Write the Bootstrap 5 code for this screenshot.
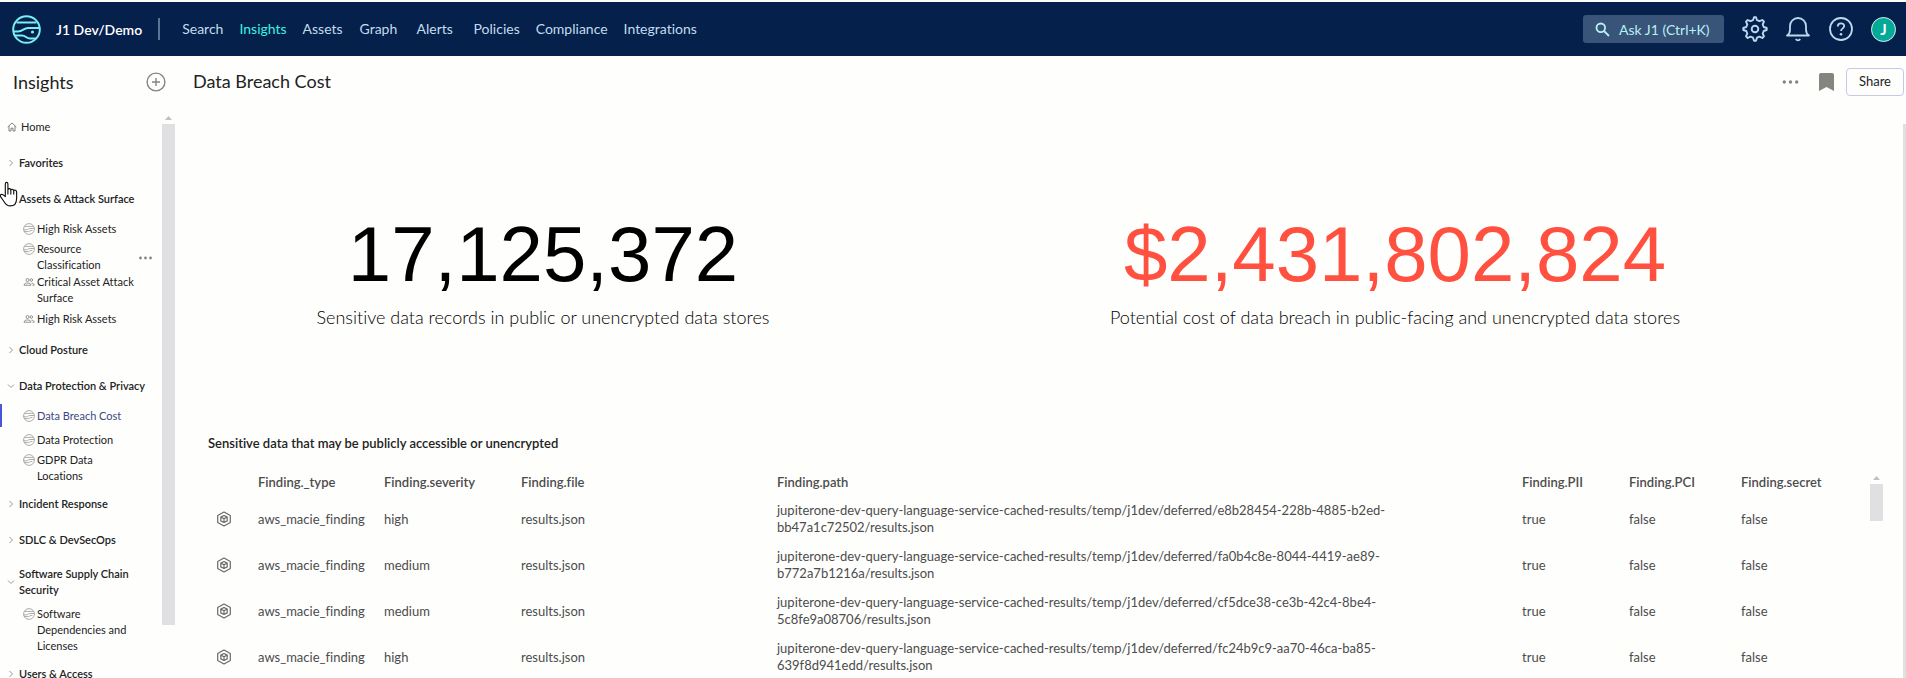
<!DOCTYPE html>
<html lang="en">
<head>
<meta charset="utf-8">
<meta name="viewport" content="width=device-width, initial-scale=1">
<title>Data Breach Cost - Insights</title>
<link href="https://cdn.jsdelivr.net/npm/bootstrap@5.3.0/dist/css/bootstrap.min.css" rel="stylesheet">
<style>
  body { font-family: Lato, "Liberation Sans", sans-serif; font-size: 14px; font-variant-ligatures: none; background: #fefefd; color: #222; }
  svg { display: block; flex: none; }
  .topbar { height: 54px; margin-top: 2px; background: #04204b; padding: 0 10px 0 12px; }
  .org { color: #fff; font-size: 14px; font-weight: 600; margin-left: 15px; text-decoration: none; }
  .rule { width: 2px; height: 22px; background: #5a7593; margin: 0 22px 0 16px; }
  .topbar .nav-link { color: #c3dcec; padding: 0; line-height: 20px; min-width: 41px; }
  .topbar .nav-link.active { color: #3cf3e2; }
  .menu { gap: 16px; }
  .ask { width: 141px; height: 28px; background: #3a5378; color: #b4f1f5; border: 0; border-radius: 3px; font-size: 14px; padding: 0 12px; gap: 9px; }
  .tools { gap: 17px; padding-left: 18px; }
  .plain { background: none; border: 0; padding: 0; }
  .avatar { width: 25px; height: 25px; border: 1px solid #d6f3f1; background: #04a998; color: #fff; font-size: 15px; font-weight: 700; line-height: 20px; }
  .side { width: 175px; }
  .side-head { height: 52px; padding: 0 9px 0 13px; font-size: 18px; }
  .side-list { width: 162px; padding-top: 1px; font-size: 11px; line-height: 16px; }
  .side-list a, .side-list button { color: #222; text-decoration: none; text-align: left; }
  .group { display: flex; align-items: center; gap: 4px; width: 100%; min-height: 36px; padding: 0 6px 0 7px; background: none; border: 0; font-weight: 600; }
  .group.tall { min-height: 48px; padding-right: 20px; }
  .home { font-weight: 400; }
  .entries { padding: 0 0 1px; margin: 0; list-style: none; }
  .entry { display: flex; min-height: 23px; margin-bottom: 1px; padding: 0 10px 0 23px; gap: 2px; align-items: center; position: relative; }
  .entry svg { align-self: flex-start; margin-top: 2px; }
  .entry.single svg { align-self: center; margin-top: 0; }
  .entry a { flex: 1; }
  .entry.narrow { padding-right: 40px; }
  .entry.current { box-shadow: inset 2px 0 #4a55d8; }
  .entry.current a { color: #3d4784; }
  .entry .more { position: absolute; right: 10px; top: 13px; line-height: 4px; }
  .track { width: 13px; }
  .track .up { height: 4px; width: 7px; margin: 0 auto 4px; background: #c0c0c2; clip-path: polygon(50% 0, 100% 100%, 0 100%); }
  .thumb { background: #e0e0e2; }
  .side .thumb { height: 501px; }
  .findings .thumb { height: 37px; }
  .main-head { height: 52px; padding: 0 2px 0 18px; }
  .main-head h1 { font-size: 18px; margin: 0; font-weight: 400; }
  .share { width: 58px; height: 28px; border: 1px solid #c5c9e6; border-radius: 4px; background: #fefefd; font-size: 13px; padding: 0; color: #222; }
  .board { padding: 0 11px 0 13px; }
  .edge { width: 3px; margin-top: 16px; background: #e0e0e2; }
  .kpi { height: 321px; padding-top: 100px; text-align: center; }
  .kpi-num { font: 78px/92px "Liberation Sans", Arial, sans-serif; color: #000; }
  .kpi-num.alert-tone { color: #ff5040; }
  .kpi-text { font-size: 18px; font-weight: 300; line-height: 24px; margin-top: 5px; color: #000; }
  .findings { padding: 0 9px 0 20px; }
  .findings h2 { font-size: 13px; line-height: 20px; font-weight: 600; margin: 0 0 15px; }
  .grid { table-layout: fixed; width: 100%; color: #4c4c4c; font-size: 13px; line-height: 17px; }
  .grid th { font-weight: 600; height: 28px; }
  .grid td { height: 46px; }
  .grid th, .grid td { padding: 0 8px; vertical-align: middle; }
  .grid .path { padding-right: 90px; }
  .hand { position: absolute; left: 0; top: 181px; }
</style>
</head>
<body class="vh-100 overflow-hidden d-flex flex-column">
<svg width="0" height="0" class="position-absolute" aria-hidden="true">
  <defs>
    <symbol id="globe" viewBox="0 0 12 12"><g fill="none" stroke="#8b8b8b" stroke-width=".7"><circle cx="6" cy="6" r="5.400"/><path d="M1.600 3.400h8.800M.7 6.800h2.800c1.400 0 1.600-1.300 3.200-1.300h4.600M1.300 8.600h4.200c1 0 1.300-1.200 2.600-1.200h1.300"/></g></symbol>
    <symbol id="people" viewBox="0 0 12 12"><g fill="none" stroke="#858585" stroke-width=".9"><circle cx="4.500" cy="4" r="1.500"/><circle cx="8.300" cy="4" r="1.300"/><path d="M1 9.200c0-3 7-3 7 0zM8.500 7.200c1.700 0 2.700.8 2.700 2H9.500"/></g></symbol>
    <symbol id="right" viewBox="0 0 8 8"><path d="M2.500 1l3 3-3 3" fill="none" stroke="#999"/></symbol>
    <symbol id="down" viewBox="0 0 8 8"><path d="M1 2.500l3 3 3-3" fill="none" stroke="#999"/></symbol>
    <symbol id="dots" viewBox="0 0 16 4"><g fill="#858580"><circle cx="1.800" cy="2" r="1.700"/><circle cx="8" cy="2" r="1.700"/><circle cx="14.200" cy="2" r="1.700"/></g></symbol>
    <symbol id="cube" viewBox="0 0 16 16"><g fill="none" stroke="#6a6a6a" stroke-width="1.200" stroke-linejoin="round"><path d="M8 1l6.300 3.500v7L8 15l-6.300-3.500v-7z"/><path d="M8 4.500l3.200 1.600v3.800L8 11.500 4.800 9.900V6.100zM4.800 6.100L8 7.700l3.200-1.600M8 7.700v3.800"/></g></symbol>
  </defs>
</svg>

<nav class="topbar d-flex align-items-center flex-shrink-0">
  <svg width="29" height="29" viewBox="0 0 29 29" fill="none" stroke="#78eff2" stroke-width="2"><circle cx="14.500" cy="14.500" r="13.300"/><path d="M4.500 7.500h20M1.500 16.500h4.500c5 0 5.500-3.500 10-3.500h11.500M3 20.500h7c4 0 4 3 8 3h6"/><circle cx="20.500" cy="17" r="1.600" fill="#78eff2" stroke="none"/></svg>
  <a class="org" href="#">J1 Dev/Demo</a>
  <span class="rule"></span>
  <div class="menu nav flex-nowrap me-auto">
    <a class="nav-link" href="#">Search</a>
    <a class="nav-link active" href="#">Insights</a>
    <a class="nav-link" href="#">Assets</a>
    <a class="nav-link" href="#">Graph</a>
    <a class="nav-link" href="#">Alerts</a>
    <a class="nav-link" href="#">Policies</a>
    <a class="nav-link" href="#">Compliance</a>
    <a class="nav-link" href="#">Integrations</a>
  </div>
  <button class="ask d-flex align-items-center text-nowrap" type="button">
    <svg width="15" height="15" viewBox="0 0 15 15" fill="none" stroke="#b4f1f5" stroke-width="1.800"><circle cx="5.800" cy="5.800" r="4.300"/><path d="M9 9l5 5"/></svg>
    Ask J1 (Ctrl+K)
  </button>
  <div class="tools d-flex align-items-center">
    <button class="plain" type="button" aria-label="Settings"><svg width="26" height="26" viewBox="0 0 26 26" fill="none" stroke="#b9d9ee" stroke-width="1.900" stroke-linejoin="round"><path d="M11 4.200 12 1.300h2l1 2.900 2.500 1L20.300 4 22 5.700l-1.300 2.800 1 2.500 3 1v2l-3 1-1 2.500 1.300 2.800-1.700 1.700-2.800-1.300-2.500 1-1 3h-2l-1-3-2.500-1L5.700 22 4 20.300l1.300-2.800-1-2.500-3-1v-2l3-1 1-2.500L4 5.700 5.700 4l2.800 1.200z"/><circle cx="13" cy="13" r="3.300"/></svg></button>
    <button class="plain" type="button" aria-label="Notifications"><svg width="26" height="26" viewBox="0 0 26 26" fill="none" stroke="#b9d9ee" stroke-width="1.800" stroke-linejoin="round"><path d="M2 19.500c2.500-1.500 3-3 3-6V10a8 8 0 0 1 16 0v3.500c0 3 .5 4.500 3 6z"/><path d="M10.800 23c1 1.800 3.400 1.800 4.400 0"/></svg></button>
    <button class="plain" type="button" aria-label="Help"><svg width="26" height="26" viewBox="0 0 26 26" fill="none" stroke="#b9d9ee" stroke-width="1.800"><circle cx="13" cy="13" r="11"/><path d="M9.800 10.500c0-4.200 6.400-4.200 6.400-.4 0 2.200-3.200 2.400-3.200 5"/><circle cx="13" cy="18.300" r="1.300" fill="#b9d9ee" stroke="none"/></svg></button>
    <button class="avatar rounded-circle p-0" type="button">J</button>
  </div>
</nav>

<div class="d-flex flex-fill overflow-hidden">
  <aside class="side flex-shrink-0">
    <div class="side-head d-flex align-items-center justify-content-between">
      <span>Insights</span>
      <button class="plain" type="button" aria-label="Add"><svg width="20" height="20" viewBox="0 0 20 20" fill="none" stroke="#858580" stroke-width="1.400"><circle cx="10" cy="10" r="8.900"/><path d="M10 6v8M6 10h8"/></svg></button>
    </div>
    <div class="d-flex">
      <div class="side-list">
        <a class="group home" href="#"><svg width="10" height="10" viewBox="0 0 10 10" fill="none" stroke="#777" stroke-width=".9"><path d="M.7 5L5 1l4.300 4M2 4v5h2V6.200h2V9h2V4"/></svg>Home</a>
        <button class="group" type="button"><svg width="8" height="8"><use href="#right"/></svg>Favorites</button>
        <button class="group" type="button"><svg width="8" height="8"><use href="#down"/></svg>Assets &amp; Attack Surface</button>
        <ul class="entries">
          <li class="entry single"><svg width="12" height="12"><use href="#globe"/></svg><a href="#">High Risk Assets</a></li>
          <li class="entry narrow"><svg width="12" height="12"><use href="#globe"/></svg><a href="#">Resource Classification</a><button class="plain more" type="button" aria-label="More"><svg width="13" height="4"><use href="#dots"/></svg></button></li>
          <li class="entry"><svg width="12" height="12"><use href="#people"/></svg><a href="#">Critical Asset Attack Surface</a></li>
          <li class="entry single"><svg width="12" height="12"><use href="#people"/></svg><a href="#">High Risk Assets</a></li>
        </ul>
        <button class="group" type="button"><svg width="8" height="8"><use href="#right"/></svg>Cloud Posture</button>
        <button class="group" type="button"><svg width="8" height="8"><use href="#down"/></svg>Data Protection &amp; Privacy</button>
        <ul class="entries">
          <li class="entry single current"><svg width="12" height="12"><use href="#globe"/></svg><a href="#">Data Breach Cost</a></li>
          <li class="entry single"><svg width="12" height="12"><use href="#globe"/></svg><a href="#">Data Protection</a></li>
          <li class="entry narrow"><svg width="12" height="12"><use href="#globe"/></svg><a href="#">GDPR Data Locations</a></li>
        </ul>
        <button class="group" type="button"><svg width="8" height="8"><use href="#right"/></svg>Incident Response</button>
        <button class="group" type="button"><svg width="8" height="8"><use href="#right"/></svg>SDLC &amp; DevSecOps</button>
        <button class="group tall" type="button"><svg width="8" height="8"><use href="#down"/></svg>Software Supply Chain Security</button>
        <ul class="entries">
          <li class="entry"><svg width="12" height="12"><use href="#globe"/></svg><a href="#">Software Dependencies and Licenses</a></li>
        </ul>
        <button class="group" type="button"><svg width="8" height="8"><use href="#right"/></svg>Users &amp; Access</button>
      </div>
      <div class="track pt-1"><div class="up mt-1"></div><div class="thumb"></div></div>
    </div>
  </aside>

  <main class="flex-fill d-flex flex-column overflow-hidden">
    <div class="main-head d-flex align-items-center flex-shrink-0">
      <h1 class="me-auto">Data Breach Cost</h1>
      <button class="plain me-3" type="button" aria-label="More"><svg width="17" height="4"><use href="#dots"/></svg></button>
      <button class="plain ms-1 me-2" type="button" aria-label="Bookmark"><svg width="15" height="18" viewBox="0 0 15 18"><path d="M2 0h11a2 2 0 0 1 2 2v16l-7.500-4L0 18V2a2 2 0 0 1 2-2z" fill="#858580"/></svg></button>
      <button class="share ms-1" type="button">Share</button>
    </div>
    <div class="d-flex flex-fill overflow-hidden">
      <div class="board flex-fill overflow-hidden">
        <div class="row g-0">
          <section class="col-5 kpi">
            <div class="kpi-num">17,125,372</div>
            <div class="kpi-text">Sensitive data records in public or unencrypted data stores</div>
          </section>
          <section class="col-7 kpi">
            <div class="kpi-num alert-tone">$2,431,802,824</div>
            <div class="kpi-text">Potential cost of data breach in public-facing and unencrypted data stores</div>
          </section>
        </div>
        <section class="findings">
          <h2 class="pt-1">Sensitive data that may be publicly accessible or unencrypted</h2>
          <div class="d-flex">
            <table class="grid">
              <colgroup><col width="42"><col width="126"><col width="137"><col width="256"><col><col width="107"><col width="112"><col width="137"></colgroup>
              <thead>
                <tr><th></th><th>Finding._type</th><th>Finding.severity</th><th>Finding.file</th><th>Finding.path</th><th>Finding.PII</th><th>Finding.PCI</th><th>Finding.secret</th></tr>
              </thead>
              <tbody>
                <tr><td><svg width="16" height="16"><use href="#cube"/></svg></td><td>aws_macie_finding</td><td>high</td><td>results.json</td><td class="path">jupiterone-dev-query-language-service-cached-results/temp/j1dev/deferred/e8b28454-228b-4885-b2ed-bb47a1c72502/results.json</td><td>true</td><td>false</td><td>false</td></tr>
                <tr><td><svg width="16" height="16"><use href="#cube"/></svg></td><td>aws_macie_finding</td><td>medium</td><td>results.json</td><td class="path">jupiterone-dev-query-language-service-cached-results/temp/j1dev/deferred/fa0b4c8e-8044-4419-ae89-b772a7b1216a/results.json</td><td>true</td><td>false</td><td>false</td></tr>
                <tr><td><svg width="16" height="16"><use href="#cube"/></svg></td><td>aws_macie_finding</td><td>medium</td><td>results.json</td><td class="path">jupiterone-dev-query-language-service-cached-results/temp/j1dev/deferred/cf5dce38-ce3b-42c4-8be4-5c8fe9a08706/results.json</td><td>true</td><td>false</td><td>false</td></tr>
                <tr><td><svg width="16" height="16"><use href="#cube"/></svg></td><td>aws_macie_finding</td><td>high</td><td>results.json</td><td class="path">jupiterone-dev-query-language-service-cached-results/temp/j1dev/deferred/fc24b9c9-aa70-46ca-ba85-639f8d941edd/results.json</td><td>true</td><td>false</td><td>false</td></tr>
              </tbody>
            </table>
            <div class="track flex-shrink-0 pt-2"><div class="up"></div><div class="thumb"></div></div>
          </div>
        </section>
      </div>
      <div class="edge flex-shrink-0"></div>
    </div>
  </main>
</div>

<svg class="hand" width="21" height="27" viewBox="0 0 20 26" fill="#fff" stroke="#111" stroke-width="1.100" stroke-linejoin="round" aria-hidden="true"><path d="M5 15V3c0-2.200 2.500-2.200 2.500 0v5.500c.3-1.700 2.700-1.500 2.800.3.500-1.300 2.700-1 2.800.6.600-1 2.800-.7 2.800 1.100v6c0 4.500-2.200 7.500-6.200 7.500-3.600 0-5-2.500-6.500-5L.4 15c-.7-1.800 1.200-2.800 2.500-1.700zM7.500 8.500v4.500M10.300 8.800v4.200M13.100 9.500V13"/></svg>
<script src="https://cdn.jsdelivr.net/npm/bootstrap@5.3.0/dist/js/bootstrap.bundle.min.js"></script>
</body>
</html>
